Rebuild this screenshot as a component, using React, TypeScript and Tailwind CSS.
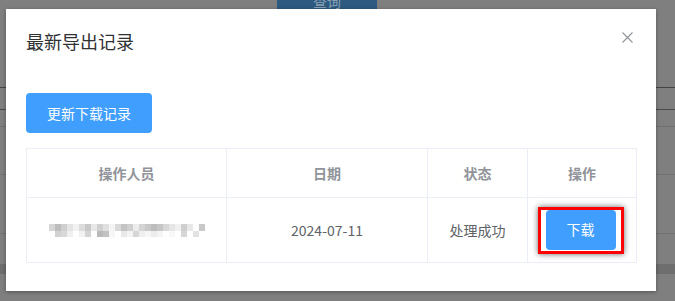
import React from 'react';

const top = ['#d6d6d6', '#bdbdbd', '#cfcfcf', '#e4e4e4', '#f2f2f2', '#dcdcdc', '#c8c8c8', '#e8e8e8', '#d0d0d0', '#e0e0e0', '#f4f4f4', '#d9d9d9', '#c4c4c4', '#cfcfcf', '#ececec', '#d4d4d4', '#c9c9c9', '#bdbdbd', '#c6c6c6', '#d8d8d8', '#e6e6e6', '#f0f0f0', '#cfcfcf', '#e8e8e8', '#ffffff', '#c8c8c8'];
const bottom = ['#ffffff', '#d2d2d2', '#d8d8d8', '#f0f0f0', '#ffffff', '#f2f2f2', '#d4d4d4', '#ffffff', '#b9b9b9', '#c2c2c2', '#f6f6f6', '#ffffff', '#e8e8e8', '#f4f4f4', '#d6d6d6', '#efefef', '#f6f6f6', '#ececec', '#f4f4f4', '#ffffff', '#f8f8f8', '#ffffff', '#d6d6d6', '#ffffff', '#e2e2e2', '#ffffff'];

const Mosaic: React.FC = () => (
  <div className="flex flex-col items-center" aria-label="操作人员">
    <div className="flex">
      {top.map((c, i) => (
        <span key={i} className="block w-[6px] h-[7px]" style={{ backgroundColor: c }} />
      ))}
    </div>
    <div className="flex">
      {bottom.map((c, i) => (
        <span key={i} className="block w-[6px] h-[6px]" style={{ backgroundColor: c }} />
      ))}
    </div>
  </div>
);

const App: React.FC = () => {
  return (
    <div
      className="relative w-[675px] h-[301px] overflow-hidden bg-[#7f7f7f]"
      style={{ fontFamily: '"Noto Sans CJK SC", "Noto Sans", "Liberation Sans", sans-serif' }}
    >
      {/* page underneath the overlay */}
      <div className="flex flex-col">
        <div className="h-[88px] border-b border-[#444] flex justify-center pl-[2px]">
          <div className="w-[100px] h-[9px] ml-[-23px] bg-[#2d5a80] overflow-hidden flex justify-center">
            <span className="text-[14px] leading-[14px] -mt-[6px] text-[#8aa0b4]">查询</span>
          </div>
        </div>
        <div className="h-[22px] border-b border-[#4a4a4a]" />
        <div className="h-[17px] border-b border-[#707070]" />
        <div className="h-[48px] border-b border-[#727272]" />
        <div className="h-[59px] border-b border-[#727272]" />
        <div className="h-[30px]" />
        <div className="h-[10px] bg-[#6e6e6e]" />
      </div>

      {/* dialog */}
      <div className="absolute left-[6px] top-[9px] w-[650px] h-[282px] bg-white shadow-[0_1px_4px_rgba(0,0,0,0.35)]">
        <div className="px-5 pt-5 pb-[10px]">
          <span className="block text-[18px] leading-6 text-[#303133]">最新导出记录</span>
        </div>
        <button className="absolute top-[23px] right-[23px] w-[11px] h-[11px] text-[#909399]">
          <svg viewBox="0 0 11 11" className="w-[11px] h-[11px]" fill="none" stroke="currentColor" strokeWidth="1.1">
            <path d="M0.5 0.5 L10.5 10.5 M10.5 0.5 L0.5 10.5" />
          </svg>
        </button>

        <div className="px-5 pt-[30px]">
          <button className="w-[126px] h-[40px] rounded-[4px] bg-[#409eff] text-white text-[14px]">
            更新下载记录
          </button>

          <table className="mt-[15px] w-[610px] border-collapse table-fixed text-[14px]">
            <colgroup>
              <col className="w-[200px]" />
              <col className="w-[201px]" />
              <col className="w-[100px]" />
              <col className="w-[109px]" />
            </colgroup>
            <thead>
              <tr className="h-[49px]">
                {['操作人员', '日期', '状态', '操作'].map((h) => (
                  <th key={h} className="border border-[#ebeef5] font-bold text-[#909399] text-center">
                    {h}
                  </th>
                ))}
              </tr>
            </thead>
            <tbody>
              <tr className="h-[65px] text-[#606266] text-center">
                <td className="border border-[#ebeef5]">
                  <Mosaic />
                </td>
                <td className="border border-[#ebeef5]">2024-07-11</td>
                <td className="border border-[#ebeef5]">处理成功</td>
                <td className="border border-[#ebeef5]">
                  <div className="flex justify-center pr-[3px]">
                    <div className="border-[3px] border-[#ff0000] bg-white px-[5px] pb-px shadow-[0_0_6px_rgba(0,0,0,0.6)]">
                      <button className="block w-[70px] h-[40px] rounded-[4px] bg-[#409eff] text-white text-[14px]">
                        下载
                      </button>
                    </div>
                  </div>
                </td>
              </tr>
            </tbody>
          </table>
        </div>
      </div>
    </div>
  );
};

export default App;
